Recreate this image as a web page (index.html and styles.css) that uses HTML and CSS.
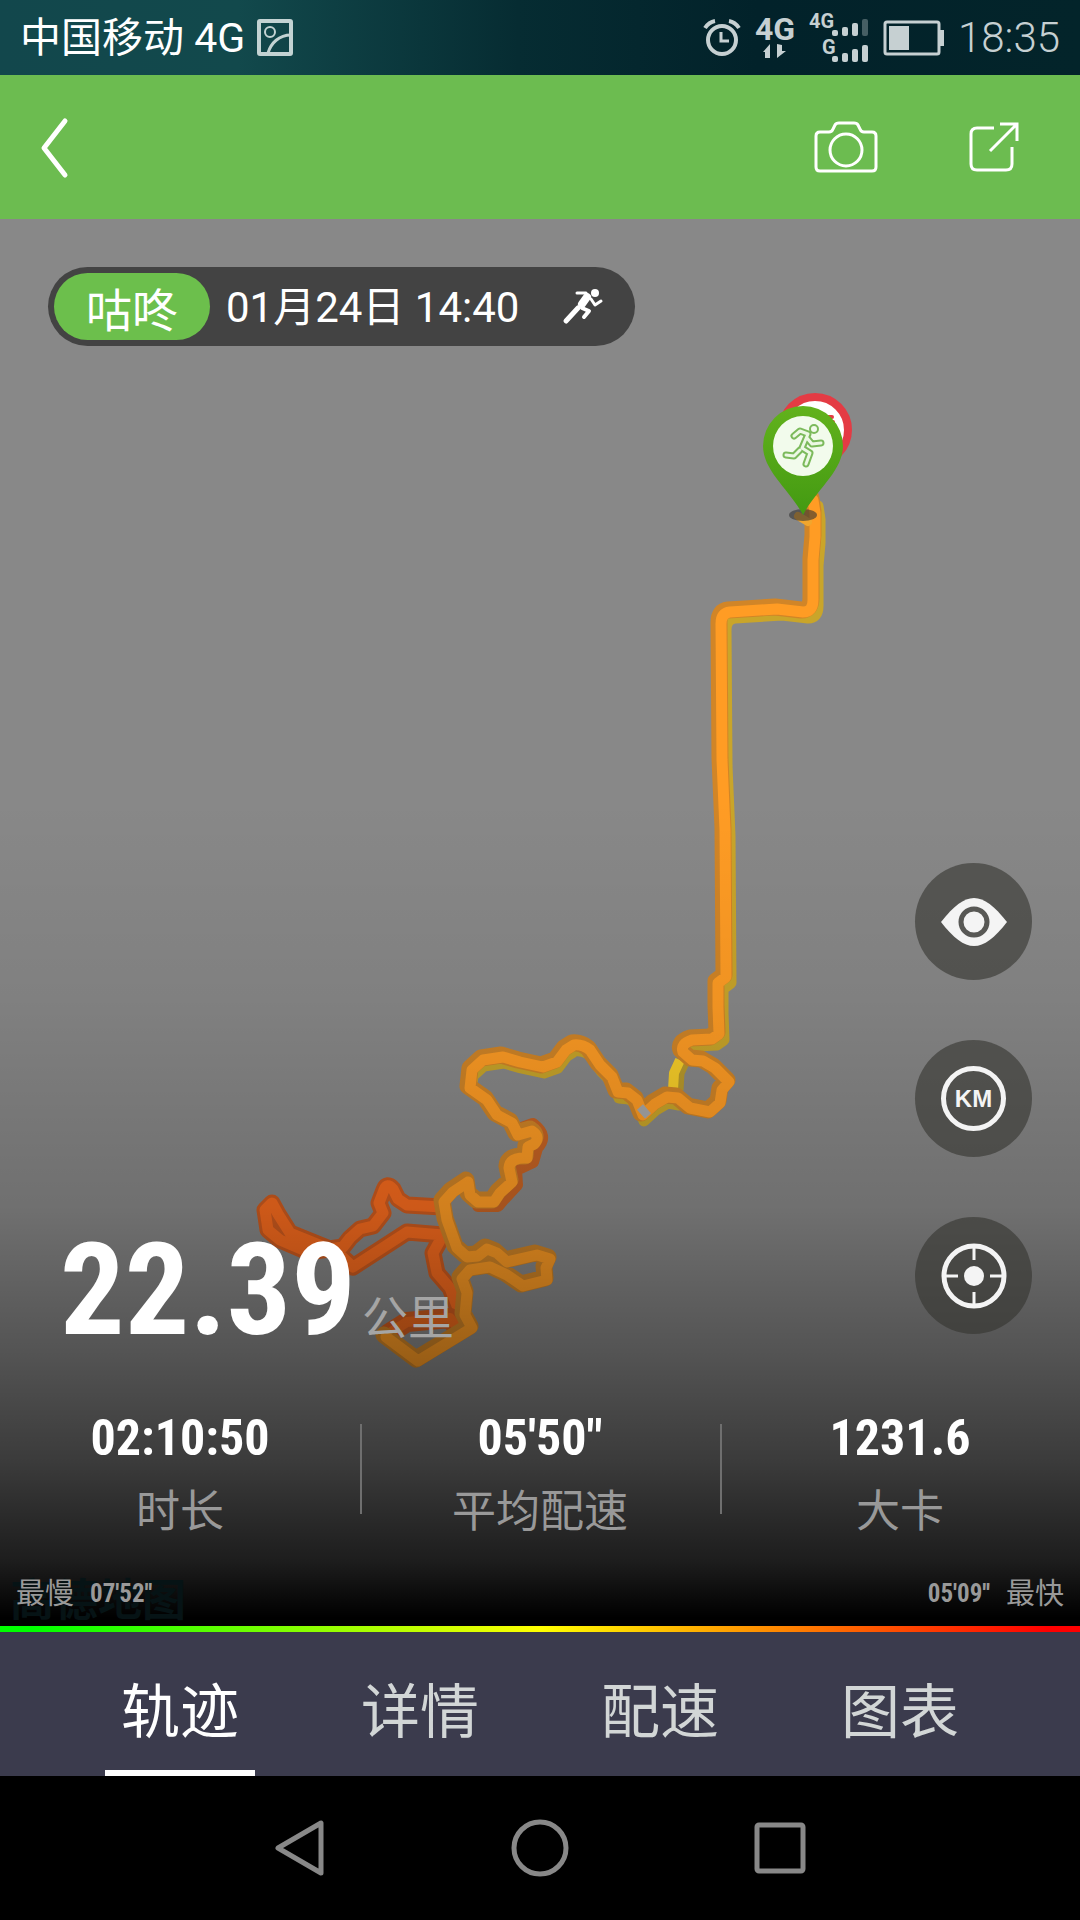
FILE: index.html
```html
<!DOCTYPE html>
<html lang="zh-CN">
<head>
    <meta charset="UTF-8">
    <meta name="viewport" content="width=device-width, initial-scale=1.0">
    <title>咕咚 - 轨迹</title>

    <link rel="stylesheet" href="styles.css">
</head>
<body>

<div class="status-bar">
    <div class="status-left">
        <span class="carrier">中国移动 4G</span>
        <svg width="36" height="37" viewBox="0 0 36 37" fill="none" stroke="#c3d3d3">
            <rect x="2" y="2" width="32" height="33" rx="1" stroke-width="4"/>
            <circle cx="13" cy="13" r="5" stroke-width="2"/>
            <path d="M11 34C14 24 22 16 34 16" stroke-width="3"/>
        </svg>
    </div>
    <div class="status-right">
        <svg width="38" height="40" viewBox="0 0 38 40" fill="none" stroke="#c6d0d2">
            <circle cx="19" cy="22" r="14" stroke-width="4"/>
            <path d="M18 14v9h8" stroke-width="3"/>
            <path d="M2 10Q6 4 12 3M26 3Q32 4 36 10" stroke-width="4"/>
        </svg>
        <svg width="40" height="56" viewBox="0 0 40 56" fill="#c6d0d2">
            <text class="net-big" x="0" y="30">4G</text>
            <path d="M15 34v14h-5v-6H8zM22 34v14l9-7h-4v-6z"/>
        </svg>
        <svg width="60" height="56" viewBox="0 0 60 56" fill="#c6d0d2">
            <text class="net-small" x="0" y="18">4G</text>
            <text class="net-small" x="13" y="44">G</text>
            <rect x="23" y="20" width="6" height="6" rx="2"/>
            <rect x="33" y="17" width="6" height="9" rx="2"/>
            <rect x="43" y="13" width="6" height="13" rx="2"/>
            <rect x="53" y="9" width="6" height="17" rx="2" opacity=".35"/>
            <rect x="23" y="46" width="6" height="6" rx="2"/>
            <rect x="33" y="43" width="6" height="9" rx="2"/>
            <rect x="43" y="39" width="6" height="13" rx="2"/>
            <rect x="53" y="35" width="6" height="17" rx="2"/>
        </svg>
        <svg width="61" height="36" viewBox="0 0 61 36" fill="#c6d0d2">
            <rect x="2" y="2" width="54" height="32" rx="2" fill="none" stroke="#c6d0d2" stroke-width="3"/>
            <rect x="6" y="6" width="20" height="24"/>
            <path d="M57 10h4v16h-4z"/>
        </svg>
        <span class="clock">18:35</span>
    </div>
</div>

<header class="header">
    <button class="icon-btn" aria-label="返回">
        <svg width="28" height="60" viewBox="0 0 28 60" fill="none" stroke="#fff" stroke-width="5" stroke-linecap="round" stroke-linejoin="round">
            <path d="M25 4L4 31L25 58"/>
        </svg>
    </button>
    <div class="header-actions">
        <button class="icon-btn" aria-label="拍照">
            <svg width="64" height="52" viewBox="0 0 64 52" fill="none" stroke="#fff" stroke-width="3">
                <path d="M6 11H15Q18 11 19 8L21 4Q22 2 25 2H40Q43 2 44 4L46 8Q47 11 50 11H58Q62 11 62 15V46Q62 50 58 50H6Q2 50 2 46V15Q2 11 6 11Z"/>
                <circle cx="32" cy="29" r="16"/>
            </svg>
        </button>
        <button class="icon-btn" aria-label="分享">
            <svg width="50" height="50" viewBox="0 0 50 50" fill="none" stroke="#fff" stroke-width="3">
                <path d="M25 6H8Q2 6 2 12V42Q2 48 8 48H37Q43 48 43 42V25"/>
                <path d="M31 2H48V19M48 2L21 29"/>
            </svg>
        </button>
    </div>
</header>

<main class="map">
    <!-- 跑步轨迹 -->
    <svg class="track" viewBox="0 219 1080 1413" preserveAspectRatio="xMidYMin slice" fill="none" stroke-linejoin="round" stroke-linecap="round">
        <defs>
            <linearGradient id="pinGreen" x1="0" y1="0" x2="0" y2="1">
                <stop offset="0" stop-color="#62b21c"/>
                <stop offset="1" stop-color="#439a12"/>
            </linearGradient>
            <path id="hot" d="M442 1207L407 1205L398 1199L393 1189Q387 1182 384 1190L379 1203L383 1213L373 1226L360 1229L350 1238L343 1247L308 1252L280 1240L268 1230L265 1210L272 1203L278 1214L290 1233L337 1252L353 1267L407 1232L443 1235L433 1253L437 1273L450 1288L461 1316"/>
            <path id="hot-loop" d="M388 1334L407 1322L450 1318L459 1330"/>
            <path id="out" d="M813 500L815 513L815 537L813 560V600Q813 612 803 612L777 609L730 612Q721 613 721 624L722 760L725 830L726 977L718 983V1007L719 1034L712 1039L692 1040Q680 1044 683 1052L692 1060L703 1061L715 1068L729 1082L722 1090L720 1103L710 1112L690 1108L678 1098L667 1097L655 1104L643 1115L637 1100L628 1093L618 1092L612 1077L600 1065L590 1050Q582 1044 574 1045L566 1050L557 1062L543 1067L520 1062L503 1057L483 1060L472 1070L470 1088L487 1100L497 1115L512 1123L518 1135L532 1131Q541 1137 534 1144L528 1147L527 1158Q510 1157 509 1168L512 1182L500 1193L494 1202H478L470 1195L468 1182L453 1192L444 1202L447 1220L457 1248L467 1257L478 1256L487 1249L497 1253L507 1262L537 1255L550 1259L546 1268L547 1280L523 1286L507 1275L490 1267L470 1270L462 1279L467 1293L465 1315L472 1328L418 1361L386 1337"/>
            <path id="top" d="M813 500L815 513L815 537L813 560V600Q813 612 803 612L777 609L730 612Q721 613 721 624L722 760L725 830L726 977L718 983V1007L719 1034L712 1039L692 1040L683 1050"/>
            <path id="mid" d="M678 1099L667 1097L655 1104L643 1115L637 1100L628 1093L618 1092L612 1077L600 1065L590 1050Q582 1044 574 1045L566 1050L557 1062L543 1067L520 1062L503 1057L483 1060L472 1070L470 1084"/>
        </defs>
        <use href="#hot" stroke="#d05c1f" stroke-width="17"/>
        <use href="#hot" stroke="#fa6c1e" stroke-width="11"/>
        <use href="#hot-loop" stroke="#d05c1f" stroke-width="20"/>
        <use href="#hot-loop" stroke="#ee691c" stroke-width="10"/>
        <use href="#top" x="5" y="6" stroke="#c9a52a" stroke-width="11"/>
        <use href="#mid" x="1" y="6" stroke="#c9a52a" stroke-width="11"/>
        <path d="M684 1060L678 1073L677 1090" stroke="#b99a2c" stroke-width="13" stroke-linecap="butt"/>
        <path d="M680 1060L674 1073L673 1090" stroke="#f9cf29" stroke-width="10" stroke-linecap="butt"/>
        <path d="M502 1118L519 1129L533 1124Q549 1136 537 1148L533 1162L516 1170L517 1185L503 1200L498 1206H478" stroke="#c86424" stroke-width="12"/>
        <use href="#out" x="-2" y="-2" stroke="#d18527" stroke-width="17"/>
        <use href="#out" stroke="#ff9c24" stroke-width="11"/>
        <path d="M640 1107L648 1116" stroke="#a9a9a9" stroke-width="8" stroke-linecap="butt"/>
        <path d="M798 516L808 522" stroke="#f1a62e" stroke-width="8"/>

        <circle cx="815" cy="430" r="33" fill="#fff" stroke="#e43b44" stroke-width="8"/>
        <path d="M828 417h4M830 422h3" stroke="#e43b44" stroke-width="4"/>
        <ellipse cx="803" cy="515" rx="14" ry="6" fill="#333" opacity=".6"/>
        <path d="M803 515C790 490 763 471 763 446A40 40 0 0 1 843 446C843 471 816 490 803 515Z" fill="url(#pinGreen)"/>
        <circle cx="803" cy="446" r="30" fill="#f2fbec"/>
        <g stroke="#7cba5c">
            <path d="M794 436L800 431L808 434L802 448L810 453L806 464M807 438L812 444L821 443M800 450L794 456L786 455" stroke-width="7"/>
            <circle cx="814" cy="429" r="4" stroke-width="2"/>
        </g>
        <path d="M794 436L800 431L808 434L802 448L810 453L806 464M807 438L812 444L821 443M800 450L794 456L786 455" stroke="#ecf8e4" stroke-width="3"/>
    </svg>
    <div class="shade"></div>

    <div class="run-tag">
        <span class="app-name">咕咚</span>
        <span class="run-date">01月24日 14:40</span>
        <svg width="40" height="36" viewBox="0 0 40 36" fill="none" stroke="#fff" stroke-linecap="round" stroke-linejoin="round">
            <circle cx="32" cy="4" r="4" fill="#fff" stroke="none"/>
            <path d="M14 4H23" stroke-width="3"/>
            <path d="M24 8L19 15" stroke-width="8"/>
            <path d="M15 19L3 32" stroke-width="5"/>
            <path d="M19 19L26 22L21 28" stroke-width="4"/>
            <path d="M28 10L32 16L38 12" stroke-width="3"/>
        </svg>
    </div>

    <div class="map-middle">
        <div class="distance">
            <span class="distance-value">22.39</span>
            <span class="distance-unit">公里</span>
        </div>
        <div class="map-controls">
            <button class="round-btn" aria-label="显示地图">
                <svg width="66" height="50" viewBox="0 0 66 50">
                    <path d="M0 25C25-7 41-7 66 25C41 57 25 57 0 25Z" fill="#f4f4f4"/>
                    <circle cx="33" cy="25" r="13" fill="#f4f4f4" stroke="#585855" stroke-width="5"/>
                </svg>
            </button>
            <button class="round-btn"><span class="km">KM</span></button>
            <button class="round-btn" aria-label="定位">
                <svg width="66" height="66" viewBox="0 0 66 66" fill="none" stroke="#f4f4f4">
                    <circle cx="33" cy="33" r="30" stroke-width="5"/>
                    <path d="M33 3v14M33 49v14M3 33h14M49 33h14" stroke-width="3"/>
                    <circle cx="33" cy="33" r="10" fill="#f4f4f4" stroke="none"/>
                </svg>
            </button>
        </div>
    </div>

    <div class="stats">
        <div class="stat">
            <div class="stat-value">02:10:50</div>
            <div class="stat-label">时长</div>
        </div>
        <div class="stat">
            <div class="stat-value">05'50"</div>
            <div class="stat-label">平均配速</div>
        </div>
        <div class="stat">
            <div class="stat-value">1231.6</div>
            <div class="stat-label">大卡</div>
        </div>
    </div>

    <div class="pace-range">
        <span class="watermark">高德地图</span>
        <div class="pace">最慢 <b>07'52''</b></div>
        <div class="pace"><b>05'09''</b> 最快</div>
    </div>
    <div class="pace-line"></div>
</main>

<nav class="tabs">
    <a href="#track" class="tab active">轨迹</a>
    <a href="#detail" class="tab">详情</a>
    <a href="#pace" class="tab">配速</a>
    <a href="#chart" class="tab">图表</a>
</nav>

<div class="nav-bar">
    <button class="nav-btn" aria-label="后退">
        <svg width="56" height="60" viewBox="0 0 56 60" fill="none" stroke="#888" stroke-width="5" stroke-linejoin="round">
            <path d="M49 5V55L6 30Z"/>
        </svg>
    </button>
    <button class="nav-btn" aria-label="主屏幕">
        <svg width="60" height="60" viewBox="0 0 60 60" fill="none" stroke="#888" stroke-width="5">
            <circle cx="30" cy="30" r="26"/>
        </svg>
    </button>
    <button class="nav-btn" aria-label="最近任务">
        <svg width="60" height="60" viewBox="0 0 60 60" fill="none" stroke="#888" stroke-width="5">
            <rect x="7" y="7" width="46" height="46" rx="2"/>
        </svg>
    </button>
</div>

</body>
</html>
```
FILE: styles.css
```css
* {
    box-sizing: border-box;
}

body {
    font-family: Roboto, "Noto Sans CJK SC", sans-serif;
    display: flex;
    flex-direction: column;
    min-height: 100vh;
    margin: 0;
    background: #000;
    color: #fff;
}

button {
    border: none;
    padding: 0;
    background: none;
    color: inherit;
    cursor: pointer;
}

svg {
    display: block;
    overflow: visible;
}

/* Status bar */
.status-bar {
    display: flex;
    justify-content: space-between;
    align-items: center;
    height: 75px;
    padding: 0 20px;
    background: linear-gradient(90deg, #12474c 0%, #12494c 22%, #062c32 48%, #02222a 70%, #03242a 100%);
}

.status-left,
.status-right {
    display: flex;
    align-items: center;
}

.status-left {
    gap: 12px;
}

.status-right {
    gap: 14px;
}

.carrier {
    font-size: 41px;
    line-height: 50px;
}

.clock {
    font-size: 42px;
    font-weight: 300;
    line-height: 46px;
    color: #c6d0d2;
}

.net-big {
    font-size: 32px;
    font-weight: bold;
}

.net-small {
    font-size: 20px;
    font-weight: bold;
}

/* Header */
.header {
    display: flex;
    justify-content: space-between;
    align-items: center;
    height: 144px;
    padding: 0 61px 0 40px;
    background: #6cbc50;
}

.header-actions {
    display: flex;
    align-items: center;
    gap: 91px;
}

/* Map */
.map {
    position: relative;
    display: flex;
    flex-direction: column;
    flex: 1;
    background: #888;
}

.track,
.shade {
    position: absolute;
    top: 0;
    left: 0;
    width: 100%;
    height: 100%;
}

.shade {
    background: linear-gradient(180deg,
        rgba(0, 0, 0, 0) 41%,
        rgba(0, 0, 0, 0.06) 55%,
        rgba(0, 0, 0, 0.18) 70%,
        rgba(0, 0, 0, 0.38) 80%,
        rgba(0, 0, 0, 0.57) 88%,
        rgba(0, 0, 0, 0.79) 95%,
        #000 99%);
}

.run-tag,
.map-middle,
.stats,
.pace-range,
.pace-line {
    position: relative;
}

.run-tag {
    display: flex;
    align-items: center;
    align-self: flex-start;
    height: 79px;
    margin: 48px;
    padding: 0 32px 0 6px;
    border-radius: 40px;
    background: #434343;
}

.app-name {
    width: 156px;
    height: 67px;
    margin-right: 16px;
    border-radius: 34px;
    background: #6cbf4c;
    font-size: 46px;
    line-height: 76px;
    text-align: center;
}

.run-date {
    margin-right: 44px;
    font-size: 42px;
    line-height: 50px;
    padding-top: 3px;
}

.map-middle {
    display: flex;
    justify-content: space-between;
    align-items: flex-end;
    margin-top: auto;
    padding: 0 48px 0 60px;
}

.distance {
    display: flex;
    align-items: baseline;
    gap: 6px;
}

.distance-value {
    font-family: "Roboto Condensed", Roboto, sans-serif;
    font-size: 128px;
    font-weight: bold;
    line-height: 88px;
}

.distance-unit {
    font-size: 46px;
    line-height: 32px;
    color: #a5a5a5;
}

.map-controls {
    display: flex;
    flex-direction: column;
    gap: 60px;
}

.round-btn {
    display: flex;
    align-items: center;
    justify-content: center;
    width: 117px;
    height: 117px;
    border-radius: 50%;
    background: rgba(52, 52, 46, 0.6);
}

.km {
    width: 65px;
    border: 5px solid #f4f4f4;
    border-radius: 50%;
    font-family: "Liberation Sans", sans-serif;
    font-size: 24px;
    font-weight: bold;
    line-height: 55px;
    color: #f4f4f4;
}

.stats {
    display: flex;
    margin-top: 74px;
}

.stat {
    flex: 1;
    text-align: center;
}

/* Divider between the columns */
.stat + .stat {
    background: linear-gradient(#6f6f6f, #6f6f6f) left 16px / 2px 90px no-repeat;
}

.stat-value {
    font-family: "Roboto Condensed", Roboto, sans-serif;
    font-size: 50px;
    font-weight: bold;
    line-height: 60px;
}

.stat-label {
    margin-top: 14px;
    font-size: 44px;
    line-height: 60px;
    color: #999;
}

.pace-range {
    display: flex;
    justify-content: space-between;
    margin-top: 32px;
    padding: 0 16px 12px;
}

.watermark {
    position: absolute;
    left: 10px;
    bottom: 0;
    font-size: 44px;
    font-weight: bold;
    line-height: 50px;
    color: #061315;
}

.pace {
    position: relative;
    display: flex;
    align-items: center;
    gap: 16px;
    font-size: 29px;
    line-height: 40px;
    color: #999;
}

.pace b {
    font-family: "Roboto Condensed", Roboto, sans-serif;
    font-size: 25px;
}

.pace-line {
    height: 6px;
    background: linear-gradient(90deg, #0f0 3%, #ff0 50%, #f00 97%);
}

/* Tabs */
.tabs {
    display: flex;
    height: 144px;
    padding: 0 60px;
    background: #3b3b4d;
}

.tab {
    flex: 1;
    font-size: 59px;
    line-height: 162px;
    text-align: center;
    color: #d2d6d6;
    text-decoration: none;
}

.tab.active {
    color: #fff;
    background: linear-gradient(#fff, #fff) center bottom / 150px 6px no-repeat;
}

/* Navigation bar */
.nav-bar {
    display: flex;
    justify-content: center;
    align-items: center;
    height: 144px;
    background: #000;
}

.nav-btn {
    display: flex;
    justify-content: center;
    width: 240px;
}
```
